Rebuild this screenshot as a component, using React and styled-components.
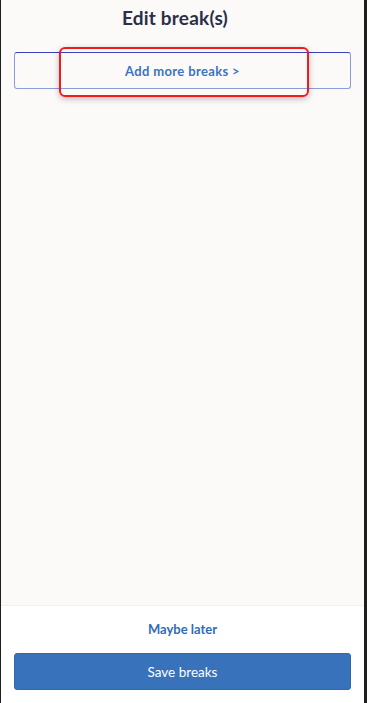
import styled, { createGlobalStyle } from "styled-components";

const Global = createGlobalStyle`
  html, body {
    margin: 0;
    padding: 0;
    background: #1f1f1f;
  }
  * { box-sizing: border-box; }
`;

const Screen = styled.div`
  width: 367px;
  height: 703px;
  display: flex;
  flex-direction: column;
  border-left: 1px solid #1e1e1e;
  border-right: 3px solid #1e1e1e;
  background: #fbfaf9;
  font-family: Lato, "Noto Sans", sans-serif;
`;

const Body = styled.div`
  flex: 1;
  display: flex;
  flex-direction: column;
  padding: 0 13px 0 13px;
`;

const Title = styled.h1`
  margin: 0;
  padding: 6px 15px 0 0;
  height: 52px;
  text-align: center;
  font-size: 19px;
  font-weight: 700;
  letter-spacing: 0.2px;
  color: #2b2f47;
`;

const AddWrap = styled.div`
  position: relative;
`;

const OutlineButton = styled.button`
  width: 100%;
  height: 37px;
  background: transparent;
  border: 1px solid #8c9bd9;
  border-top-color: #3a42c2;
  border-radius: 3px;
  color: #3a73c0;
  font-family: inherit;
  font-size: 13px;
  font-weight: 700;
  letter-spacing: 0.35px;
  cursor: pointer;
`;

const Highlight = styled.div`
  position: absolute;
  left: 45px;
  top: -5px;
  width: 250px;
  height: 50px;
  border: 2px solid #f21a1a;
  border-radius: 6px;
  box-shadow: 0 2px 6px rgba(0, 0, 0, 0.25);
  pointer-events: none;
`;

const Footer = styled.div`
  height: 98px;
  background: #ffffff;
  border-top: 1px solid #f1f0ee;
  display: flex;
  flex-direction: column;
  align-items: center;
  padding: 0 13px;
`;

const LinkButton = styled.button`
  margin-top: 13px;
  height: 20px;
  background: none;
  border: none;
  color: #2f6cb8;
  font-family: inherit;
  font-size: 13px;
  font-weight: 700;
  cursor: pointer;
`;

const PrimaryButton = styled.button`
  margin-top: 14px;
  width: 100%;
  height: 37px;
  background: #3872bb;
  border: 1px solid #3169b1;
  border-radius: 3px;
  color: #ffffff;
  font-family: inherit;
  font-size: 13.5px;
  cursor: pointer;
`;

export default function App() {
  return (
    <>
      <Global />
      <Screen>
        <Body>
          <Title>Edit break(s)</Title>
          <AddWrap>
            <OutlineButton>Add more breaks &gt;</OutlineButton>
            <Highlight />
          </AddWrap>
        </Body>
        <Footer>
          <LinkButton>Maybe later</LinkButton>
          <PrimaryButton>Save breaks</PrimaryButton>
        </Footer>
      </Screen>
    </>
  );
}
